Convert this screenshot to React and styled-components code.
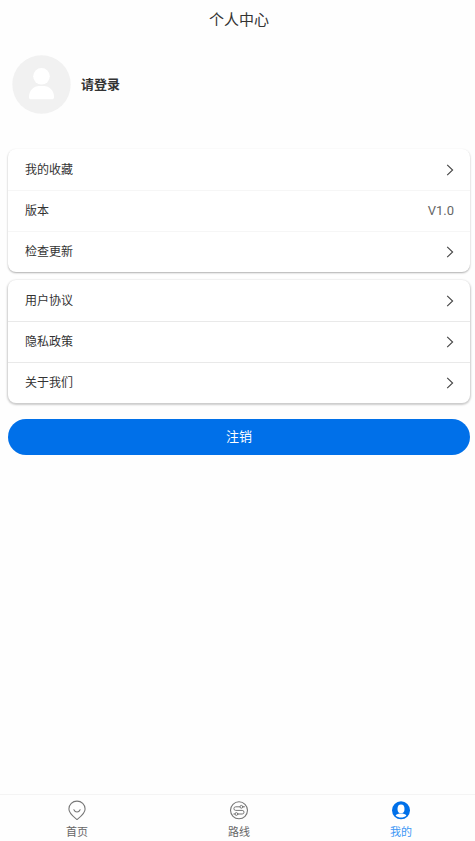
import { useState } from "react";
import styled, { createGlobalStyle } from "styled-components";

const GlobalStyle = createGlobalStyle`
    * {
        box-sizing: border-box;
    }

    body {
        margin: 0;
        background: #fefefe;
        color: #333;
        font-family: Roboto, "Noto Sans CJK SC", sans-serif;
    }

    button {
        margin: 0;
        padding: 0;
        border: none;
        background: transparent;
        color: inherit;
        font-family: inherit;
        cursor: pointer;
    }
`;

const Page = styled.div`
    min-height: 100vh;
    display: flex;
    flex-direction: column;
`;

const Title = styled.h1`
    margin: 0;
    padding-left: 3px;
    font-size: 15px;
    font-weight: 400;
    line-height: 40px;
    text-align: center;
`;

const Content = styled.main`
    flex: 1;
    padding: 15px 5px 16px 8px;
`;

const User = styled.button`
    display: flex;
    align-items: center;
    gap: 10px;
    margin: 0 0 35px 4px;
    font-size: 13px;
    font-weight: 700;
    line-height: 20px;
`;

const Row = styled.button`
    width: 100%;
    height: 41px;
    display: flex;
    align-items: center;
    justify-content: space-between;
    padding: 0 16px 0 17px;
    font-size: 12px;
    line-height: 20px;
`;

const Card = styled.section`
    margin-bottom: 8px;
    border-radius: 8px;
    background: #fff;
    box-shadow: ${props => props.$raised
        ? "0 1px 2px 1px rgba(0, 0, 0, .2)"
        : "0 1px 2px rgba(0, 0, 0, .32)"
    };

    ${Row} + ${Row} {
        border-top: 1px solid ${props => props.$line};
    }
`;

const RowValue = styled.span`
    color: #666;
    font-size: 13px;
`;

const LogoutButton = styled.button`
    display: block;
    width: 100%;
    height: 36px;
    margin-top: 16px;
    border-radius: 18px;
    background: #0070e9;
    color: #fff;
    font-size: 13px;
    line-height: 20px;

    &:active {
        opacity: .8;
    }
`;

const TabBar = styled.nav`
    display: flex;
    justify-content: space-between;
    padding: 5px 63px 0 66px;
    border-top: 1px solid #f4f4f4;
`;

const Tab = styled.button`
    display: flex;
    flex-direction: column;
    align-items: center;
    gap: 5px;
    color: ${props => props.$active ? "#3d97f5" : "#666"};
    font-size: 11px;
    line-height: 16px;
`;

const Avatar = () => (
    <svg width="59" height="59" viewBox="0 0 59 59" aria-hidden="true">
        <circle cx="29.5" cy="29.5" r="29.2" fill="#f1f1f1" />
        <circle cx="29.5" cy="21.300" r="8.300" fill="#fff" />
        <path d="M17 42c0-7 5-11 10-11h5c5 0 10 4 10 11 0 1.600-.6 2.300-2 2.300H19c-1.400 0-2-.7-2-2.300z" fill="#fff" />
    </svg>
);

const Arrow = () => (
    <svg width="8" height="12" viewBox="0 0 8 12" fill="none" stroke="#444" strokeWidth="1.1" aria-hidden="true">
        <path d="M1.200.8 6.600 6l-5.400 5.200" />
    </svg>
);

const HomeIcon = () => (
    <svg width="20" height="20" viewBox="0 0 20 20" fill="none" stroke="#777" strokeWidth="1.1" strokeLinecap="round" aria-hidden="true">
        <path d="M10 19.500C7.500 17.500 1.900 13.700 1.900 9a8.100 7.900 0 0 1 16.200 0C18.100 13.700 12.500 17.500 10 19.500z" />
        <path d="M6.900 9.800c1.400 3 4.800 3 6.200 0" />
    </svg>
);

const RouteIcon = () => (
    <svg width="20" height="20" viewBox="0 0 20 20" fill="none" stroke="#777" strokeLinecap="round" aria-hidden="true">
        <circle cx="10" cy="10.300" r="8.500" strokeWidth="1.1" />
        <path d="M10.800 6.800H6.700a1.800 1.800 0 0 0 0 3.600h6.500a1.800 1.800 0 0 1 0 3.600H9M14 6.800h1.500M4.800 14h1" />
        <circle cx="12.400" cy="6.800" r="1.400" />
        <circle cx="7.400" cy="14" r="1.400" />
    </svg>
);

const MineIcon = () => (
    <svg width="20" height="20" viewBox="0 0 20 20" aria-hidden="true">
        <circle cx="10" cy="10.300" r="9" fill="#0070e9" />
        <ellipse cx="10" cy="8.900" rx="3.500" ry="4.300" fill="#fff" />
        <path d="M4.600 15.400c1-1.400 3.200-1.800 5.400-1.800s4.400.4 5.400 1.800c-1.400 1.400-3.300 2.100-5.400 2.100s-4-.7-5.400-2.100z" fill="#fff" />
    </svg>
);

const groups = [
    {
        line: "#f6f6f6",
        raised: false,
        rows: [{ label: "我的收藏" }, { label: "版本", value: "V1.0" }, { label: "检查更新" }],
    },
    {
        line: "#e9e9e9",
        raised: true,
        rows: [{ label: "用户协议" }, { label: "隐私政策" }, { label: "关于我们" }],
    },
];

const tabs = [
    { label: "首页", Icon: HomeIcon },
    { label: "路线", Icon: RouteIcon },
    { label: "我的", Icon: MineIcon },
];

export default function App() {
    const [activeTab, setActiveTab] = useState("我的");

    return (
        <Page>
            <GlobalStyle />
            <Title>个人中心</Title>

            <Content>
                <User>
                    <Avatar />
                    <span>请登录</span>
                </User>

                {groups.map(({ line, raised, rows }, index) => (
                    <Card key={index} $line={line} $raised={raised}>
                        {rows.map(({ label, value }) => (
                            <Row key={label}>
                                <span>{label}</span>
                                {value ? <RowValue>{value}</RowValue> : <Arrow />}
                            </Row>
                        ))}
                    </Card>
                ))}

                <LogoutButton>注销</LogoutButton>
            </Content>

            <TabBar>
                {tabs.map(({ label, Icon }) => (
                    <Tab key={label} $active={label === activeTab} onClick={() => setActiveTab(label)}>
                        <Icon />
                        <span>{label}</span>
                    </Tab>
                ))}
            </TabBar>
        </Page>
    );
}
